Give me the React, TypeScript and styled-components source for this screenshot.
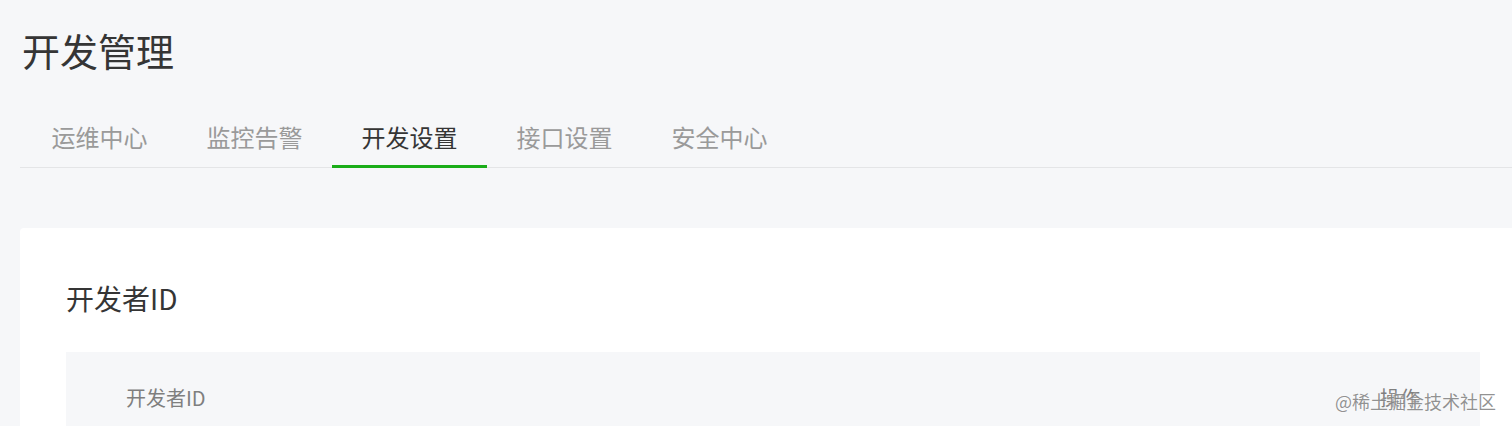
import React from "react";
import styled, { createGlobalStyle } from "styled-components";

const Global = createGlobalStyle`
  html, body { margin: 0; padding: 0; background: #f6f7f9; }
  body { font-family: "Noto Sans CJK SC", "Noto Sans", sans-serif; overflow: hidden; }
`;

const Page = styled.div`
  position: relative;
  width: 1512px;
  height: 426px;
  overflow: hidden;
  padding: 0 0 0 20px;
  box-sizing: border-box;
  background: #f6f7f9;
`;

const Title = styled.h1`
  margin: 0;
  padding: 26px 0 0 2px;
  font-size: 38px;
  line-height: 48px;
  font-weight: 400;
  color: #353535;
`;

const TabBar = styled.nav`
  display: flex;
  margin-top: 31px;
  padding-left: 2px;
  border-bottom: 1px solid #e4e5e7;
`;

const Tab = styled.div<{ $active?: boolean }>`
  width: 155px;
  height: 63px;
  box-sizing: border-box;
  display: flex;
  align-items: center;
  justify-content: center;
  font-size: 24px;
  color: ${(p) => (p.$active ? "#353535" : "#9a9a9a")};
  border-bottom: 3px solid ${(p) => (p.$active ? "#1aad19" : "transparent")};
  margin-bottom: -1px;
  padding-top: 2px;
`;

const Card = styled.section`
  margin-top: 60px;
  margin-right: -14px;
  background: #fff;
  border-radius: 4px;
  padding: 50px 46px 0 46px;
  height: 400px;
  box-sizing: border-box;
`;

const CardTitle = styled.h2`
  margin: 0;
  font-size: 28px;
  line-height: 40px;
  font-weight: 400;
  color: #353535;
`;

const TableHead = styled.div`
  margin-top: 34px;
  background: #f6f7f9;
  height: 90px;
  display: flex;
  align-items: center;
  justify-content: space-between;
  padding: 0 60px;
  box-sizing: border-box;
`;

const HeadCell = styled.span`
  font-size: 20px;
  color: #7f7f7f;
`;

const Watermark = styled.div`
  position: absolute;
  right: 16px;
  bottom: 12px;
  font-size: 18px;
  color: rgba(110, 110, 110, 0.75);
  text-shadow: 0 0 2px #fff;
`;

const tabs = ["运维中心", "监控告警", "开发设置", "接口设置", "安全中心"];

export default function App() {
  return (
    <Page>
      <Global />
      <Title>开发管理</Title>
      <TabBar>
        {tabs.map((t) => (
          <Tab key={t} $active={t === "开发设置"}>
            {t}
          </Tab>
        ))}
      </TabBar>
      <Card>
        <CardTitle>开发者ID</CardTitle>
        <TableHead>
          <HeadCell>开发者ID</HeadCell>
          <HeadCell>操作</HeadCell>
        </TableHead>
      </Card>
      <Watermark>@稀土掘金技术社区</Watermark>
    </Page>
  );
}
